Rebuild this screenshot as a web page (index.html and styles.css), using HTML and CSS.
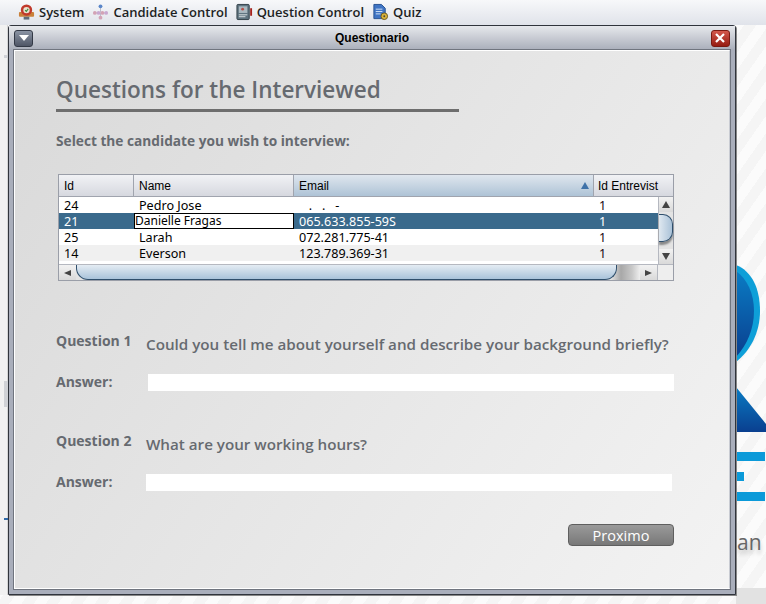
FILE: index.html
```html
<!DOCTYPE html>
<html lang="en">
<head>
    <meta charset="UTF-8">
    <title>Questionario</title>
    <link rel="stylesheet" href="styles.css">
</head>
<body>
    <div class="menubar">
        <div class="menu-item">
            <svg class="menu-icon" viewBox="0 0 18 18"><rect x="1" y="9" width="16" height="5" rx="1" fill="#c9803a"/><rect x="6" y="14" width="6" height="3" fill="#5f6b78"/><circle cx="9" cy="7" r="6" fill="#c0392b"/><circle cx="9" cy="7" r="3.4" fill="#e8e2d0"/><path d="M7.500 7l1.300 1.300 2-2.600" fill="none" stroke="#3a8a3a" stroke-width="1.200"/></svg>
            <span>System</span>
        </div>
        <div class="menu-item">
            <svg class="menu-icon" viewBox="0 0 18 18"><path d="M9 4v5M3 10h12M9 10v4" stroke="#b9b9c9" stroke-width="1" fill="none"/><circle cx="9" cy="3" r="2" fill="#5b86c9"/><circle cx="3" cy="10" r="2" fill="#d3a3b5"/><circle cx="7" cy="10" r="2" fill="#c9a8d0"/><circle cx="11" cy="10" r="2" fill="#d3a3b5"/><circle cx="15" cy="10" r="2" fill="#c9a8d0"/><circle cx="9" cy="15" r="2" fill="#d3a3b5"/></svg>
            <span>Candidate Control</span>
        </div>
        <div class="menu-item">
            <svg class="menu-icon" viewBox="0 0 18 18"><rect x="1" y="1" width="13" height="16" rx="1" fill="#5f7480" stroke="#2f3d45" stroke-width="1"/><rect x="3" y="3" width="9" height="7" fill="#aab9c0"/><circle cx="7" cy="6" r="1.500" fill="#b5504a"/><path d="M3 12h9M3 14h7" stroke="#dfe5e8" stroke-width="1"/><rect x="15" y="5" width="2" height="8" fill="#a5211c"/></svg>
            <span>Question Control</span>
        </div>
        <div class="menu-item">
            <svg class="menu-icon" viewBox="0 0 18 18"><path d="M2 1h8l4 4v11H2z" fill="#3f74c4" stroke="#24508f" stroke-width="1"/><path d="M4 6h7M4 8.500h7M4 11h5" stroke="#d5e3f5" stroke-width="1"/><circle cx="13" cy="13.500" r="3.500" fill="#d9b33c" stroke="#6b5a1e" stroke-width="1"/><circle cx="13" cy="13.500" r="1" fill="#4a4a3a"/></svg>
            <span>Quiz</span>
        </div>
    </div>

    <div class="desktop">
        <div class="left-strip"></div>
        <div class="edge-mark edge-mark-1"></div>
        <div class="edge-mark edge-mark-2"></div>
        <div class="edge-mark edge-mark-3"></div>

        <svg class="logo" viewBox="0 0 30 240" width="30" height="240">
            <defs>
                <linearGradient id="logoBlue" x1="0" y1="0" x2="0" y2="1">
                    <stop offset="0" stop-color="#0a7cc4"/>
                    <stop offset="1" stop-color="#0a3f8f"/>
                </linearGradient>
            </defs>
            <path d="M0 0C16 6 24 24 24 46C24 68 14 86 0 97z" fill="#0e9fd8"/>
            <path d="M0 6C11 14 18 28 18 46C18 64 11 80 0 92z" fill="url(#logoBlue)"/>
            <path d="M0 122L30 159V167H0z" fill="url(#logoBlue)"/>
            <rect x="0" y="187" width="29" height="9" fill="#0b9ad9"/>
            <rect x="0" y="207" width="8" height="9" fill="#0b9ad9"/>
            <rect x="0" y="227" width="29" height="9" fill="#0b9ad9"/>
        </svg>
        <span class="logo-text">an</span>
        <div class="desktop-floor"></div>

        <div class="window">
            <div class="titlebar">
                <div class="title-btn menu-btn"><svg viewBox="0 0 10 6" width="10" height="6"><path d="M0 0h10L5 6z" fill="#fff"/></svg></div>
                <div class="title-text">Questionario</div>
                <div class="title-btn close-btn"><svg viewBox="0 0 10 10" width="10" height="10"><path d="M1 1l8 8M9 1l-8 8" stroke="#fff" stroke-width="2.200"/></svg></div>
            </div>
            <div class="panel">
                <h1 class="heading">Questions for the Interviewed</h1>
                <p class="select-label">Select the candidate you wish to interview:</p>

                <div class="table">
                    <div class="thead">
                        <div class="th col-id">Id</div>
                        <div class="th col-name">Name</div>
                        <div class="th th-sorted col-email">Email<span class="sort-arrow"></span></div>
                        <div class="th col-int">Id Entrevist</div>
                    </div>
                    <div class="tbody">
                        <div class="rows">
                            <div class="row">
                                <div class="td col-id">24</div><div class="td col-name">Pedro Jose</div><div class="td col-email">&nbsp;&nbsp;&nbsp;.&nbsp;&nbsp;&nbsp;.&nbsp;&nbsp;&nbsp;-</div><div class="td td-int col-int">1</div>
                            </div>
                            <div class="row row-selected">
                                <div class="td col-id">21</div><div class="td td-edit col-name">Danielle Fragas</div><div class="td col-email">065.633.855-59S</div><div class="td col-int">1</div>
                            </div>
                            <div class="row">
                                <div class="td col-id">25</div><div class="td col-name">Larah</div><div class="td col-email">072.281.775-41</div><div class="td td-int col-int">1</div>
                            </div>
                            <div class="row row-alt">
                                <div class="td col-id">14</div><div class="td col-name">Everson</div><div class="td col-email">123.789.369-31</div><div class="td td-int col-int">1</div>
                            </div>
                        </div>
                        <div class="vscroll">
                            <div class="scroll-btn"><span class="arrow-up"></span></div>
                            <div class="vtrack"><div class="vthumb"></div></div>
                            <div class="scroll-btn"><span class="arrow-down"></span></div>
                        </div>
                    </div>
                    <div class="hscroll">
                        <div class="scroll-btn"><span class="arrow-left"></span></div>
                        <div class="htrack"><div class="hthumb"></div></div>
                        <div class="scroll-btn"><span class="arrow-right"></span></div>
                        <div class="scroll-corner"></div>
                    </div>
                </div>

                <div class="question question-1">
                    <div class="q-label">Question 1</div>
                    <div class="q-text">Could you tell me about yourself and describe your background briefly?</div>
                </div>
                <div class="answer">
                    <div class="a-label">Answer:</div>
                    <div class="a-field a-field-1"></div>
                </div>

                <div class="question question-2">
                    <div class="q-label">Question 2</div>
                    <div class="q-text">What are your working hours?</div>
                </div>
                <div class="answer">
                    <div class="a-label">Answer:</div>
                    <div class="a-field"></div>
                </div>

                <div class="actions">
                    <button class="next-btn">Proximo</button>
                </div>
            </div>
        </div>
    </div>
</body>
</html>
```

FILE: styles.css
```css
html, body {
    margin: 0;
    height: 100%;
    overflow: hidden;
}
body {
    width: 766px;
    height: 604px;
    font-family: "Open Sans", sans-serif;
    background-color: #fff;
}
.menubar {
    display: flex;
    align-items: center;
    height: 25px;
    padding: 0 0 1px 18px;
    gap: 8px;
    box-sizing: border-box;
    background: linear-gradient(#f7f8fa, #e0e3ea);
}
.menu-item {
    display: flex;
    align-items: center;
    gap: 4px;
    font-size: 13px;
    font-weight: 600;
    color: #1d1f24;
}
.menu-icon {
    width: 17px;
    height: 18px;
}
.desktop {
    position: relative;
    height: 579px;
    background: repeating-linear-gradient(-55deg, #f5f5f5 0 10px, #fbfbfb 10px 20px);
}
.left-strip {
    position: absolute;
    left: 0;
    top: 0;
    width: 8px;
    height: 570px;
    background-color: #f1f1f1;
    border-right: 1px solid #d5d5d5;
    box-sizing: border-box;
}
.edge-mark {
    position: absolute;
    left: 4px;
    width: 4px;
    background-color: #d0d2d6;
}
.edge-mark-1 {
    top: 30px;
    height: 3px;
}
.edge-mark-2 {
    top: 356px;
    height: 26px;
}
.edge-mark-3 {
    top: 493px;
    height: 2px;
    background-color: #2f6aa8;
}
.logo {
    position: absolute;
    left: 736px;
    top: 240px;
}
.logo-text {
    position: absolute;
    left: 737px;
    top: 503px;
    font-size: 21px;
    color: #666;
    text-shadow: 0 4px 4px #bbb;
}
.desktop-floor {
    position: absolute;
    left: 736px;
    right: 0;
    top: 563px;
    bottom: 0;
    background-color: #e2e2e2;
}
.window {
    position: absolute;
    left: 8px;
    top: 0;
    width: 728px;
    height: 570px;
    box-sizing: border-box;
    display: flex;
    flex-direction: column;
    border: 1px solid #30343c;
    border-radius: 3px 3px 0 0;
    background-color: #a9aebb;
    box-shadow: 1px 1px 0 #888;
}
.titlebar {
    display: flex;
    align-items: center;
    justify-content: space-between;
    height: 24px;
    padding: 0 5px;
    flex-shrink: 0;
    background: linear-gradient(#e6e8ec, #a9aeba);
}
.title-text {
    font-family: "Liberation Sans", sans-serif;
    font-size: 12px;
    font-weight: bold;
    color: #000;
}
.title-btn {
    display: flex;
    align-items: center;
    justify-content: center;
    width: 19px;
    height: 17px;
    border-radius: 3px;
    box-sizing: border-box;
}
.menu-btn {
    background: linear-gradient(#8b94a4, #4f5666);
    border: 1px solid #333946;
}
.close-btn {
    background: linear-gradient(#d3584c, #961c12);
    border: 1px solid #7a1a12;
}
.panel {
    flex: 1;
    margin: 0 5px 5px 5px;
    padding: 0 0 0 41px;
    border: 1px solid #fff;
    border-right-color: #c9ccd3;
    outline: 1px solid #70757f;
    background: linear-gradient(125deg, #d9d9d9, #f3f3f3);
    box-sizing: border-box;
    color: #666a70;
}
.heading {
    width: 403px;
    height: 61px;
    box-sizing: border-box;
    margin: 0;
    padding-top: 22px;
    font-size: 22.500px;
    font-weight: 600;
    line-height: 33px;
    color: #666a70;
    border-bottom: 3px solid #6e6e6e;
    white-space: nowrap;
}
.select-label {
    margin: 19px 0 0 0;
    font-size: 13.700px;
    font-weight: 700;
    line-height: 20px;
}
.table {
    width: 616px;
    margin: 23px 0 0 2px;
    border: 1px solid #9a9ea8;
    box-sizing: border-box;
    font-family: "Noto Sans", sans-serif;
    font-size: 12.600px;
    color: #000;
    background-color: #eee;
}
.thead {
    display: flex;
    height: 21px;
    border-bottom: 1px solid #a0a4ae;
}
.th {
    display: flex;
    align-items: center;
    padding-left: 5px;
    box-sizing: border-box;
    background: linear-gradient(#f1f2f5, #d6d8df);
    border-right: 1px solid #a0a4ae;
    font-family: "Liberation Sans", sans-serif;
    font-size: 12px;
}
.th:last-child {
    border-right: none;
    padding-left: 4px;
}
.th-sorted {
    position: relative;
    background: linear-gradient(#dfe6ee, #aec3d6);
}
.sort-arrow {
    position: absolute;
    right: 4px;
    top: 7px;
    width: 0;
    height: 0;
    border-left: 4px solid transparent;
    border-right: 4px solid transparent;
    border-bottom: 7px solid #3f72a8;
}
.col-id {
    width: 75px;
}
.col-name {
    width: 160px;
}
.col-email {
    width: 300px;
}
.col-int {
    width: 79px;
}
.tbody {
    display: flex;
    height: 67px;
    background-color: #fff;
}
.rows {
    width: 599px;
    overflow: hidden;
}
.row {
    display: flex;
    height: 16px;
    line-height: 18px;
    background-color: #fff;
}
.row-alt {
    background-color: #f0f0f0;
}
.row-selected {
    color: #fff;
    background-color: #3a6a8c;
}
.td {
    padding-left: 5px;
    box-sizing: border-box;
    white-space: nowrap;
    flex-shrink: 0;
}
.td.col-int {
    width: 64px;
}
.td-int {
    color: #220812;
}
.td.td-edit {
    padding-left: 0;
    font-size: 12px;
    line-height: 13px;
    color: #000;
    background-color: #fff;
    border: 1px solid #000;
}
.vscroll {
    display: flex;
    flex-direction: column;
    width: 15px;
    border-left: 1px solid #b5b8c0;
    box-sizing: border-box;
}
.scroll-btn {
    display: flex;
    align-items: center;
    justify-content: center;
    flex: 0 0 15px;
    height: 15px;
    background: linear-gradient(#f2f2f2, #d9d9d9);
}
.vtrack {
    flex: 1;
    padding-top: 2px;
    background-color: #e3e3e3;
}
.vthumb {
    height: 28px;
    border: 1px solid #2f4f6c;
    border-left: none;
    border-radius: 0 10px 10px 0;
    box-sizing: border-box;
    background: linear-gradient(90deg, #dfe8f0, #aac2d8);
    box-shadow: 0 3px 2px #888;
}
.arrow-up, .arrow-down, .arrow-left, .arrow-right {
    width: 0;
    height: 0;
}
.arrow-up {
    border-left: 4px solid transparent;
    border-right: 4px solid transparent;
    border-bottom: 7px solid #444;
}
.arrow-down {
    border-left: 4px solid transparent;
    border-right: 4px solid transparent;
    border-top: 7px solid #444;
}
.arrow-left {
    border-top: 3px solid transparent;
    border-bottom: 3px solid transparent;
    border-right: 7px solid #444;
}
.arrow-right {
    border-top: 3px solid transparent;
    border-bottom: 3px solid transparent;
    border-left: 7px solid #444;
}
.hscroll {
    display: flex;
    height: 16px;
    border-top: 1px solid #b5b8c0;
    box-sizing: border-box;
    background-color: #e6e6e6;
}
.hscroll .scroll-btn {
    flex: 0 0 17px;
    height: auto;
}
.htrack {
    flex: 1;
    background: linear-gradient(90deg, #e3e3e3 535px, #a8a8a8 545px, #c8c8c8 556px, #eee 564px);
}
.hthumb {
    width: 541px;
    height: 100%;
    box-sizing: border-box;
    border: 1px solid #2f4f6c;
    border-top: none;
    border-radius: 0 0 12px 12px;
    background: linear-gradient(#e4ecf3, #a9c3da);
}
.scroll-corner {
    flex: 0 0 15px;
    border-left: 1px solid #b5b8c0;
    background-color: #eee;
}
.question {
    display: flex;
    gap: 15px;
}
.question-1 {
    margin-top: 50px;
}
.question-2 {
    margin-top: 40px;
}
.q-label {
    width: 75px;
    font-size: 14px;
    font-weight: 700;
    line-height: 20px;
    white-space: nowrap;
}
.q-text {
    padding-top: 3px;
    font-size: 15.200px;
    font-weight: 600;
    line-height: 20px;
    white-space: nowrap;
}
.answer {
    display: flex;
    align-items: center;
    height: 17px;
    margin-top: 20px;
}
.a-label {
    width: 90px;
    margin-top: -2px;
    font-size: 14px;
    font-weight: 700;
    line-height: 20px;
}
.a-field {
    height: 17px;
    width: 526px;
    background-color: #fff;
}
.a-field-1 {
    margin-left: 2px;
}
.actions {
    display: flex;
    justify-content: flex-end;
    width: 618px;
    margin-top: 33px;
}
.next-btn {
    width: 106px;
    height: 22px;
    padding: 0;
    font-family: "Open Sans", sans-serif;
    font-size: 14.500px;
    font-weight: 500;
    color: #fff;
    border: 1px solid #5f5f5f;
    border-radius: 4px;
    background: linear-gradient(#9a9a9a, #787878);
}
```
